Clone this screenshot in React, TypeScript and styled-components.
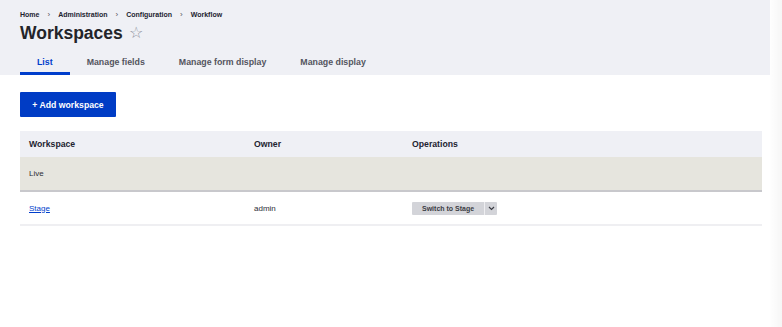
import React from "react";
import styled, { createGlobalStyle } from "styled-components";

const GlobalStyle = createGlobalStyle`
  html, body {
    margin: 0;
    padding: 0;
    background: #ffffff;
    font-family: "Liberation Sans", Arial, sans-serif;
    color: #222330;
  }
`;

const Page = styled.div`
  display: flex;
  width: 782px;
  height: 327px;
  overflow: hidden;
`;

const Main = styled.div`
  flex: 1;
  display: flex;
  flex-direction: column;
`;

const ScrollStrip = styled.div`
  width: 12px;
  background: linear-gradient(to right, rgba(0, 0, 0, 0.005), rgba(0, 0, 0, 0.035));
`;

const Header = styled.div`
  background-color: #eff0f5;
  padding: 10px 20px 0;
`;

const Breadcrumb = styled.div`
  display: flex;
  align-items: center;
  gap: 8px;
  font-size: 7px;
  font-weight: 700;
  line-height: 9px;
  color: #222330;
`;

const Sep = styled.span`
  font-weight: 400;
  color: #55565b;
  font-size: 8px;
`;

const Title = styled.h1`
  display: flex;
  align-items: center;
  gap: 6px;
  margin: 3px 0 0;
  font-size: 17.5px;
  line-height: 22px;
  font-weight: 700;
  color: #232429;
`;

const Star = styled.span`
  font-size: 16px;
  font-weight: 400;
  color: #8e929c;
`;

const Tabs = styled.div`
  display: flex;
  margin-top: 5px;
`;

const Tab = styled.div<{ active?: boolean }>`
  height: 20px;
  padding: 3px 17px 0;
  display: flex;
  align-items: center;
  font-size: 8.8px;
  font-weight: 700;
  color: ${(props) => (props.active ? "#003ecc" : "#545560")};
  border-bottom: 3px solid ${(props) => (props.active ? "#003ecc" : "transparent")};
`;

const Content = styled.div`
  padding: 17px 0 0 20px;
`;

const AddBtn = styled.button`
  display: block;
  height: 25px;
  width: 96px;
  border: none;
  border-radius: 1px;
  background-color: #003cc5;
  color: #ffffff;
  font-family: inherit;
  font-size: 8.7px;
  font-weight: 700;
  padding: 0;
`;

const Table = styled.table`
  margin-top: 14px;
  width: 742px;
  border-collapse: collapse;
  table-layout: fixed;
  font-size: 8px;
`;

const Th = styled.th<{ w?: number }>`
  width: ${(props) => (props.w ? `${props.w}px` : "auto")};
  height: 26px;
  padding: 0 9px;
  text-align: left;
  font-weight: 700;
  font-size: 8.7px;
  background-color: #eff0f5;
  color: #222330;
`;

const Tr = styled.tr<{ highlight?: boolean }>`
  background-color: ${(props) => (props.highlight ? "#e6e5de" : "#ffffff")};
  border-bottom: ${(props) => (props.highlight ? "2px solid #c8c8cc" : "2px solid #efeff2")};
`;

const Td = styled.td<{ h: number }>`
  height: ${(props) => props.h}px;
  padding: 0 9px;
  color: #2d2e36;
  font-weight: 400;
`;

const Link = styled.a`
  color: #003ecc;
  text-decoration: underline;
`;

const Dropbutton = styled.div`
  display: inline-flex;
  height: 13px;
  background-color: #d3d4d9;
  border-radius: 1px;
`;

const DropMain = styled.span`
  display: flex;
  align-items: center;
  padding: 0 10px 0 10px;
  font-size: 7px;
  font-weight: 700;
  color: #3b3c44;
`;

const DropToggle = styled.span`
  display: flex;
  align-items: center;
  justify-content: center;
  width: 12px;
  border-left: 1px solid #eeeef1;
`;

export default function App() {
  return (
    <>
      <GlobalStyle />
      <Page>
        <Main>
          <Header>
            <Breadcrumb>
              <span>Home</span>
              <Sep>›</Sep>
              <span>Administration</span>
              <Sep>›</Sep>
              <span>Configuration</span>
              <Sep>›</Sep>
              <span>Workflow</span>
            </Breadcrumb>
            <Title>
              Workspaces <Star>☆</Star>
            </Title>
            <Tabs>
              <Tab active>List</Tab>
              <Tab>Manage fields</Tab>
              <Tab>Manage form display</Tab>
              <Tab>Manage display</Tab>
            </Tabs>
          </Header>
          <Content>
            <AddBtn>+ Add workspace</AddBtn>
            <Table>
              <thead>
                <tr>
                  <Th w={207}>Workspace</Th>
                  <Th w={140}>Owner</Th>
                  <Th>Operations</Th>
                </tr>
              </thead>
              <tbody>
                <Tr highlight>
                  <Td h={33}>Live</Td>
                  <Td h={33}></Td>
                  <Td h={33}></Td>
                </Tr>
                <Tr>
                  <Td h={32}>
                    <Link>Stage</Link>
                  </Td>
                  <Td h={32}>admin</Td>
                  <Td h={32}>
                    <Dropbutton>
                      <DropMain>Switch to Stage</DropMain>
                      <DropToggle>
                        <svg width="7" height="5" viewBox="0 0 7 5">
                          <path d="M1 1l2.5 2.5L6 1" fill="none" stroke="#3b3c44" strokeWidth="1.2" />
                        </svg>
                      </DropToggle>
                    </Dropbutton>
                  </Td>
                </Tr>
              </tbody>
            </Table>
          </Content>
        </Main>
        <ScrollStrip />
      </Page>
    </>
  );
}
